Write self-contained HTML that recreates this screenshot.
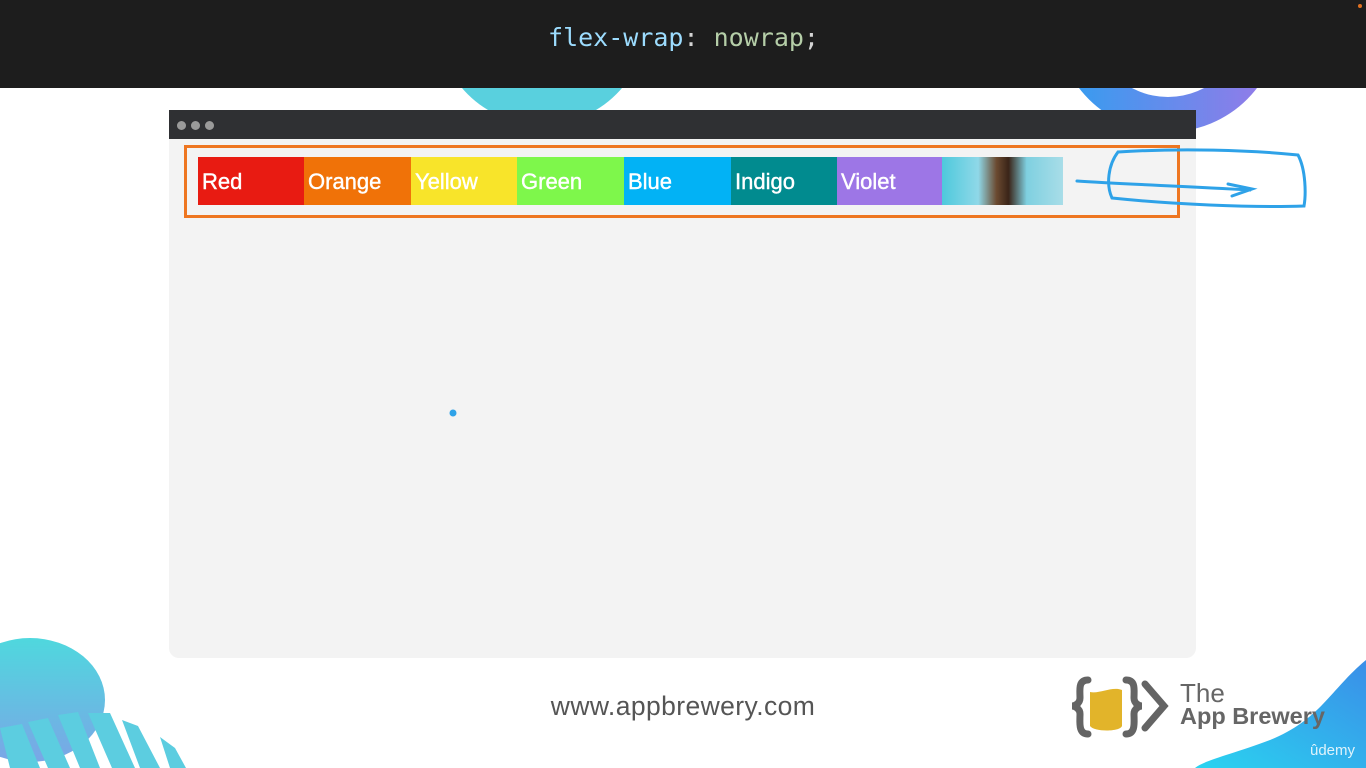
<!DOCTYPE html>
<html><head><meta charset="utf-8"><style>
*{margin:0;padding:0;box-sizing:border-box}
body{width:1366px;height:768px;overflow:hidden;background:#fff;position:relative;font-family:"Liberation Sans",Arial,sans-serif}
.hdr{position:absolute;left:0;top:0;width:1366px;height:88px;background:#1d1d1d;z-index:5}
.code{position:absolute;top:23px;left:0;width:1366px;text-align:center;font-family:"DejaVu Sans Mono","Liberation Mono",monospace;font-size:25px;color:#9cdcfe;padding-left:1px}
.code .v{color:#b5cea8}.code .p{color:#d4d4d4}
.win{position:absolute;left:169px;top:110px;width:1027px;height:548px;background:#f3f3f3;border-radius:0 0 10px 10px;z-index:3}
.bar{position:absolute;left:0;top:0;width:1027px;height:29px;background:#2f3033}
.dot{position:absolute;top:11px;width:9px;height:9px;border-radius:50%;background:#9a9a9a}
.flex{position:absolute;left:15px;top:35px;width:996px;height:73px;border:3px solid #ee7621}
.it{position:absolute;top:9px;height:48px;color:#fff;font-size:22px;line-height:50px;padding-left:4px;-webkit-text-stroke:0.4px #fff}
.url{position:absolute;left:0;width:1366px;text-align:center;top:691px;font-size:26.5px;color:#555;letter-spacing:0.4px;z-index:4}
</style></head><body>
<svg width="1366" height="768" style="position:absolute;left:0;top:0;z-index:1">
<defs>
<linearGradient id="g1" x1="0" x2="1"><stop offset="0" stop-color="#2f9ff0"/><stop offset="1" stop-color="#9a78e8"/></linearGradient>
<linearGradient id="g2" x1="0" y1="0" x2="0" y2="1"><stop offset="0" stop-color="#4fd8de"/><stop offset="1" stop-color="#7aa6e6"/></linearGradient>
<linearGradient id="g3" x1="0" y1="1" x2="1" y2="0"><stop offset="0" stop-color="#2ad4f0"/><stop offset="1" stop-color="#3a8ee8"/></linearGradient>
</defs>
<circle cx="542" cy="20" r="105" fill="#59d0de"/>
<path d="M1056,20 a112,112 0 1,0 224,0 a112,112 0 1,0 -224,0 M1091,20 a77,77 0 1,1 154,0 a77,77 0 1,1 -154,0 Z" fill="url(#g1)" fill-rule="evenodd"/>
<ellipse cx="30" cy="700" rx="75" ry="62" fill="url(#g2)"/>
<g fill="#5ccde0">
<polygon points="0,728 22,724 40,768 10,768"/>
<polygon points="28,722 48,718 70,768 48,768"/>
<polygon points="58,715 78,712 100,768 80,768"/>
<polygon points="88,713 110,713 135,768 112,768"/>
<polygon points="122,720 138,726 160,768 140,768"/>
<polygon points="160,737 175,748 186,768 170,768"/>
</g>
<path d="M1366,660 C1330,690 1320,720 1270,740 C1230,755 1205,760 1195,768 L1366,768 Z" fill="url(#g3)"/>
</svg>
<div class="hdr"><div class="code">flex-wrap<span class="p">:</span> <span class="v">nowrap</span><span class="p">;</span></div>
<div style="position:absolute;right:4px;top:4px;width:4px;height:4px;border-radius:50%;background:#e07020"></div></div>
<div class="win">
<div class="bar"><div class="dot" style="left:8px"></div><div class="dot" style="left:22px"></div><div class="dot" style="left:36px"></div></div>
<div class="flex">
<div class="it" style="left:11px;width:107px;background:#e81b12">Red</div>
<div class="it" style="left:117px;width:107px;background:#f07208">Orange</div>
<div class="it" style="left:224px;width:107px;background:#f8e42a">Yellow</div>
<div class="it" style="left:330px;width:107px;background:#7ef74b">Green</div>
<div class="it" style="left:437px;width:107px;background:#02b2f5">Blue</div>
<div class="it" style="left:544px;width:106px;background:#018b8f">Indigo</div>
<div class="it" style="left:650px;width:105px;background:#9d76e6">Violet</div>
<div class="it" style="left:755px;width:121px;background:linear-gradient(90deg,#4ec9dc,#8fd8e8 30%,#6b4a30 45%,#3a2418 55%,#7fd0e0 70%,#a8dde8)"></div>
</div>
</div>
<svg width="1366" height="768" style="position:absolute;left:0;top:0;z-index:4" fill="none">
<path d="M1077,181 C1120,184 1180,186 1250,190 M1228,184 L1252,189 L1232,196 M1118,152 C1180,148 1250,150 1298,155 C1306,170 1306,195 1304,206 C1250,208 1170,204 1112,198 C1106,185 1108,165 1118,152" stroke="#2ea2e8" stroke-width="3" stroke-linecap="round"/>
<circle cx="453" cy="413" r="3.5" fill="#2ea2e8"/>
<path d="M1088,680 C1078,680 1080,690 1080,698 C1080,704 1074,706 1072,706 C1074,706 1080,708 1080,714 C1080,722 1078,734 1088,734" stroke="#646464" stroke-width="7" stroke-linecap="round"/>
<path d="M1126,680 C1136,680 1134,690 1134,698 C1134,704 1140,706 1142,706 C1140,706 1134,708 1134,714 C1134,722 1136,734 1126,734" stroke="#646464" stroke-width="7" stroke-linecap="round"/>
<path d="M1145,684 L1164,706 L1145,728" stroke="#646464" stroke-width="7" stroke-linecap="round"/>
<path d="M1090,692 C1100,694 1112,686 1122,690 L1122,726 C1120,732 1094,732 1090,726 Z" fill="#e2b42a"/>
</svg>
<div class="url">www.appbrewery.com</div>
<div style="position:absolute;left:1180px;top:678px;font-size:26px;color:#666;z-index:4">The</div>
<div style="position:absolute;left:1180px;top:703px;font-size:23.5px;font-weight:bold;color:#666;z-index:4">App Brewery</div>
<div style="position:absolute;left:1310px;top:742px;font-size:15px;color:#dff3fb;z-index:4">ûdemy</div>
</body></html>
